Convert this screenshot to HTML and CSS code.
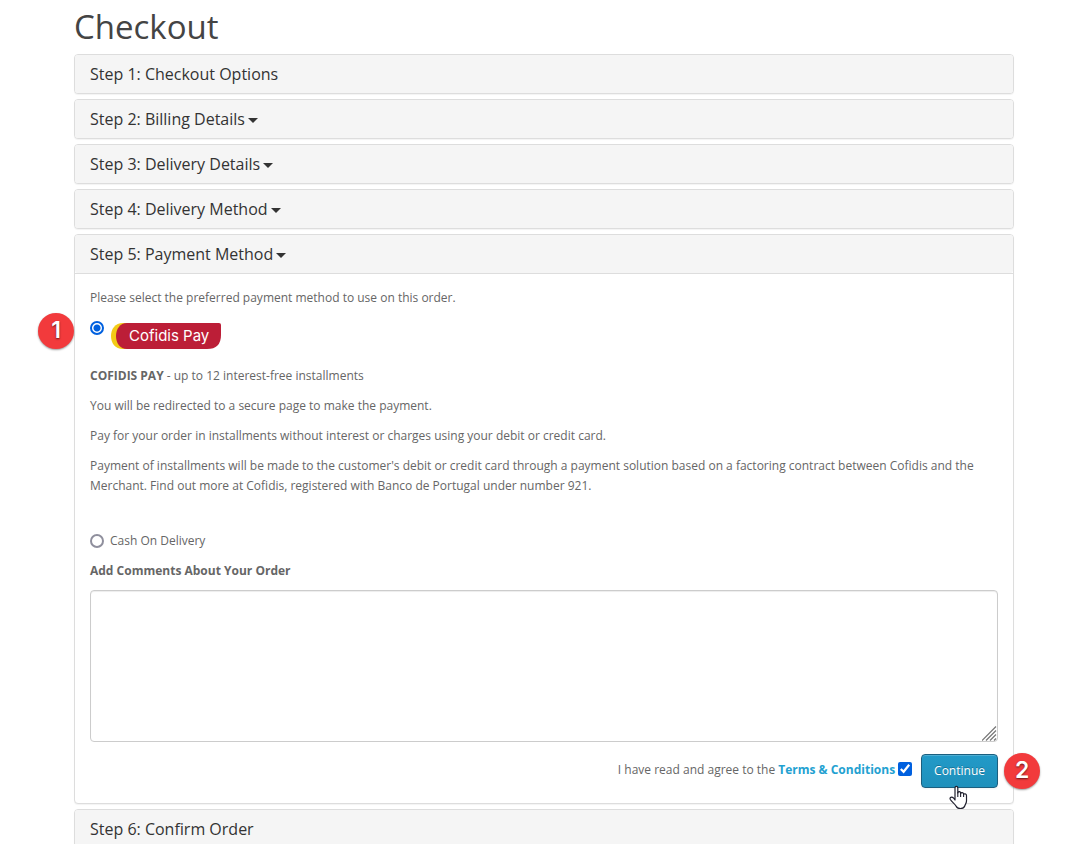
FILE: index.html
```html
<!DOCTYPE html>
<html lang="en">
<head>
<meta charset="utf-8">
<title>Checkout</title>
<link rel="stylesheet" href="styles.css">
</head>
<body>
<main class="container">
  <h1>Checkout</h1>
  <div class="panel-group">
    <section class="panel"><h4 class="panel-title">Step 1: Checkout Options</h4></section>
    <section class="panel"><h4 class="panel-title"><a href="#billing">Step 2: Billing Details <i class="caret"></i></a></h4></section>
    <section class="panel"><h4 class="panel-title"><a href="#delivery">Step 3: Delivery Details <i class="caret"></i></a></h4></section>
    <section class="panel"><h4 class="panel-title"><a href="#shipping">Step 4: Delivery Method <i class="caret"></i></a></h4></section>
    <section class="panel">
      <h4 class="panel-title"><a href="#payment">Step 5: Payment Method <i class="caret"></i></a></h4>
      <form class="panel-body" id="payment">
        <p>Please select the preferred payment method to use on this order.</p>
        <div class="option option-logo">
          <input type="radio" name="payment" id="cofidis" checked>
          <label for="cofidis">
            <svg class="logo" width="111" height="26" viewBox="0 0 111 26" role="img" aria-label="Cofidis Pay">
              <path fill="#f3cb16" d="M13 0H40V26H13C5 26 1 20 1 13S5 0 13 0Z"/>
              <path fill="#bc1e37" d="M17 0H109Q111 0 111 2V12Q111 26 97 26H17C10 26 6 20 6 13S10 0 17 0Z"/>
              <text class="logo-text" x="19" y="18">Cofidis Pay</text>
            </svg>
          </label>
          <span class="badge badge-left">1</span>
        </div>
        <div class="details">
          <p><b>COFIDIS PAY</b> - up to 12 interest-free installments</p>
          <p>You will be redirected to a secure page to make the payment.</p>
          <p>Pay for your order in installments without interest or charges using your debit or credit card.</p>
          <p>Payment of installments will be made to the customer's debit or credit card through a payment solution based on a factoring contract between Cofidis and the Merchant. Find out more at Cofidis, registered with Banco de Portugal under number 921.</p>
        </div>
        <div class="option">
          <input type="radio" name="payment" id="cod">
          <label for="cod">Cash On Delivery</label>
        </div>
        <label class="comment-label" for="comment">Add Comments About Your Order</label>
        <div class="comment-box">
          <textarea id="comment" name="comment"></textarea>
          <svg class="grip" width="15" height="15" viewBox="0 0 15 15" aria-hidden="true">
            <path fill="none" stroke="#777" stroke-width="1.2" d="M0 14.500L14 .5M4 14.500L14 4.500M8 14.500L14 8.500M12 14.500L14 12.500"/>
          </svg>
        </div>
        <div class="buttons">
          <label for="agree">I have read and agree to the <a class="terms" href="#terms">Terms &amp; Conditions</a></label>
          <input type="checkbox" id="agree" checked>
          <div class="action">
            <button type="button">Continue</button>
            <svg class="pointer" width="20" height="26" viewBox="0 0 20 26" aria-hidden="true">
              <path fill="#fff" stroke="#20202e" stroke-width="1.2" stroke-linejoin="round" d="M6 15V3C6 .8 8.800 .8 8.800 3V8C9 6 11.600 6.500 11.600 8V8.500C12 7 14.600 7.500 14.600 9V9.500C15 8.300 17.500 8.500 17.500 10.500V16C17.500 18.500 16 19.300 15.800 21C14.500 24.300 8.300 24.300 7 21C5.500 18.500 3 17 1.300 14.500C.2 12.500 2.700 11.400 4.500 13Z"/>
              <path fill="none" stroke="#20202e" stroke-width="1.1" d="M8.800 7V12M11.600 8V12M14.600 9V12"/>
            </svg>
            <span class="badge badge-right">2</span>
          </div>
        </div>
      </form>
    </section>
    <section class="panel"><h4 class="panel-title">Step 6: Confirm Order</h4></section>
  </div>
</main>
</body>
</html>
```
FILE: styles.css
```css
* {
  box-sizing: border-box;
}

html {
  overflow-x: hidden;
  scrollbar-width: none;
}

body {
  margin: 0;
  background: #fff;
  color: #666;
  font: 400 12px/20px "Open Sans", sans-serif;
}

.container {
  max-width: 941px;
  margin: 0 auto;
  padding-left: 1px;
}

h1 {
  margin: 0;
  padding: 9px 0;
  color: #444;
  font-size: 33px;
  font-weight: 400;
  line-height: 36px;
}

p {
  margin: 0 0 10px;
}

.panel-group {
  display: flex;
  flex-direction: column;
  gap: 5px;
  padding-bottom: 20px;
}

.panel {
  border: 1px solid #ddd;
  border-radius: 4px;
  background: #fff;
  box-shadow: 0 1px 1px rgba(0, 0, 0, 0.05);
}

.panel-title {
  margin: 0;
  padding: 10px 15px;
  border-radius: 3px;
  background: #f5f5f5;
  color: #333;
  font-size: 16px;
  font-weight: 400;
  line-height: 18px;
}

.panel-title a {
  color: inherit;
  text-decoration: none;
}

.caret {
  display: inline-block;
  vertical-align: middle;
  border-top: 5px solid #333;
  border-right: 5px solid transparent;
  border-left: 5px solid transparent;
  margin: 0 -1px;
}

.panel-body {
  padding: 14px 15px 15px;
  border-top: 1px solid #ddd;
}

.option {
  position: relative;
  display: flex;
  align-items: center;
  gap: 6px;
  margin-bottom: 10px;
}

.option-logo {
  align-items: flex-start;
  padding-top: 3px;
  margin-bottom: 12px;
}

.option input,
.buttons input {
  flex: none;
  width: 14px;
  height: 14px;
  margin: 0;
}

.option input {
  appearance: none;
  border: 2px solid #8f8f9d;
  border-radius: 50%;
  background: #fff;
}

.option input:checked {
  border-color: #0060df;
  background: radial-gradient(circle, #0060df 3px, #fff 4px);
}

.logo {
  display: block;
  margin-top: 2px;
}

.option-logo label {
  display: block;
  padding-bottom: 5px;
}

.logo-text {
  fill: #fff;
  font: 400 15px Inter, sans-serif;
}

.details {
  padding-bottom: 25px;
}

.comment-label {
  display: block;
  margin-bottom: 9px;
  font-weight: 700;
}

.comment-box {
  position: relative;
}

textarea {
  display: block;
  width: 100%;
  height: 152px;
  padding: 8px 13px;
  border: 1px solid #ccc;
  border-radius: 4px;
  background: #fff;
  box-shadow: inset 0 1px 1px rgba(0, 0, 0, 0.075);
  color: #555;
  font: inherit;
  resize: vertical;
}

textarea::-webkit-resizer {
  background: transparent;
}

.grip {
  position: absolute;
  right: 1px;
  bottom: 1px;
  pointer-events: none;
}

.buttons {
  display: flex;
  align-items: center;
  justify-content: flex-end;
  padding-top: 12px;
}

.buttons input {
  margin: 0 9px 4px 3px;
  accent-color: #0060df;
}

.buttons label {
  padding-bottom: 2px;
}

.terms {
  color: #23a1d1;
  font-weight: 700;
  text-decoration: none;
}

.action {
  position: relative;
}

button {
  display: block;
  padding: 6px 12px;
  border: 1px solid #1b5f7f;
  border-radius: 4px;
  background: linear-gradient(#229ac8, #1f90bb);
  box-shadow: inset 0 1px 0 rgba(255, 255, 255, 0.2), 0 1px 2px rgba(0, 0, 0, 0.05);
  color: #fff;
  font: inherit;
  text-shadow: 0 -1px 0 rgba(0, 0, 0, 0.25);
}

.badge {
  position: absolute;
  width: 36px;
  height: 36px;
  border-radius: 50%;
  background: #f23a3c;
  box-shadow: 0 1px 2px rgba(0, 0, 0, 0.4);
  color: #fff;
  font: 600 23px/35px Inter, sans-serif;
  text-align: center;
  text-shadow: 0 1px 2px rgba(0, 0, 0, 0.6);
}

.badge-left {
  top: -5px;
  left: -52px;
}

.badge-right {
  top: -1px;
  left: 83px;
}

.pointer {
  position: absolute;
  top: 31px;
  left: 28px;
}
```
